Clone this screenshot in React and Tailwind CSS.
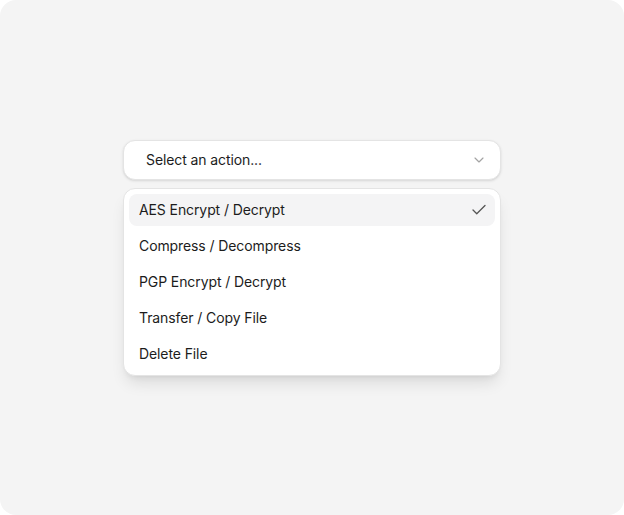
import React from 'react'
import { Check, ChevronDown } from 'lucide-react'

const actions = [
  'AES Encrypt / Decrypt',
  'Compress / Decompress',
  'PGP Encrypt / Decrypt',
  'Transfer / Copy File',
  'Delete File',
]

export default function App() {
  const selected = actions[0]

  return (
    <div className="w-[624px] h-[515px] bg-white" style={{ fontFamily: 'Inter, "Noto Sans", sans-serif' }}>
      <div className="w-full h-full bg-[#f4f4f4] rounded-[16px] flex items-center justify-center">
        <div className="w-[378px] flex flex-col gap-2">
          <button className="h-10 w-full flex items-center justify-between pl-[22px] pr-[13px] bg-white border border-[#e4e4e4] rounded-xl shadow-sm text-left">
            <span className="text-sm tracking-[-0.1px] text-[#1c1c1c]">Select an action...</span>
            <ChevronDown className="w-4 h-4 text-[#a3a3a3]" strokeWidth={1.75} />
          </button>

          <div className="bg-white border border-[#e4e4e4] rounded-xl shadow-lg p-[5px] flex flex-col gap-1">
            {actions.map(a => (
              <div
                key={a}
                className={
                  a === selected
                    ? 'h-8 flex items-center justify-between pl-2.5 pr-[7px] rounded-lg bg-[#f4f4f5]'
                    : 'h-8 flex items-center justify-between pl-2.5 pr-[7px] rounded-lg'
                }
              >
                <span className="text-sm tracking-[-0.1px] text-[#1c1c1c]">{a}</span>
                {a === selected && <Check className="w-[18px] h-[18px] text-[#555]" strokeWidth={1.75} />}
              </div>
            ))}
          </div>
        </div>
      </div>
    </div>
  )
}
